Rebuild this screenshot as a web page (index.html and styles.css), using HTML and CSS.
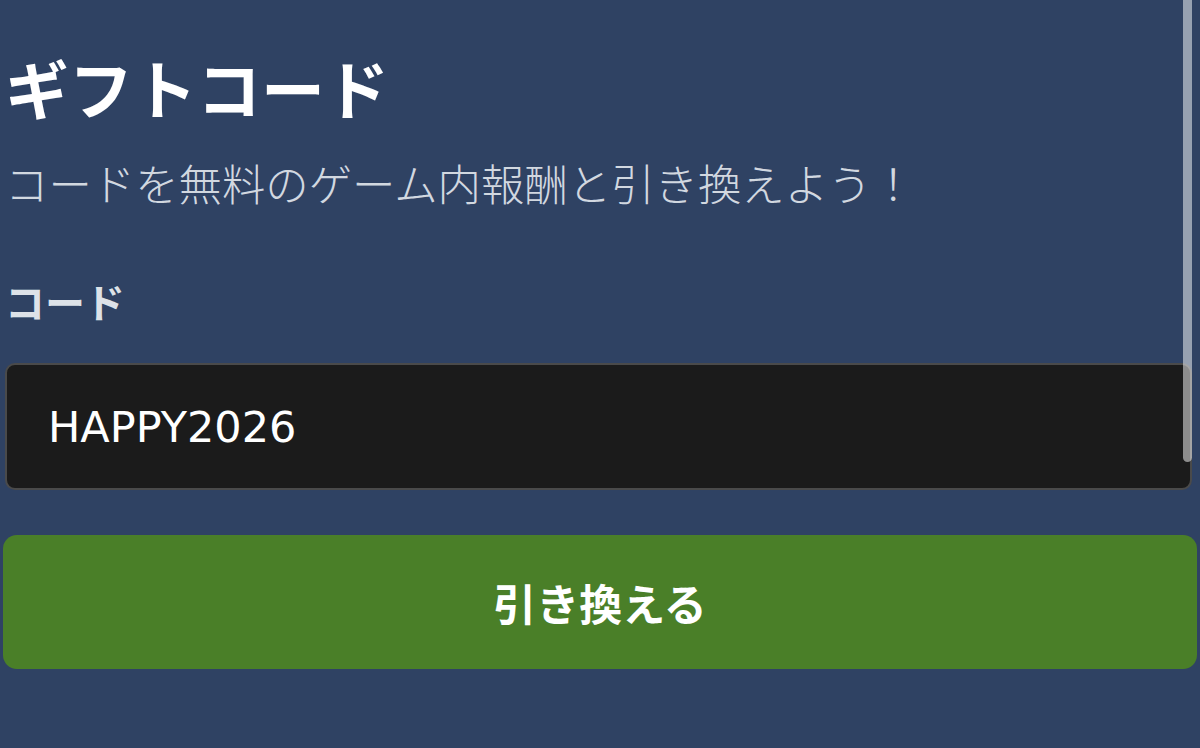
FILE: index.html
```html
<!DOCTYPE html>
<html lang="ja">
<head>
<meta charset="utf-8">
<title>ギフトコード</title>
<link rel="stylesheet" href="styles.css">
</head>
<body>
<main class="page">
  <h1 class="title">ギフトコード</h1>
  <p class="subtitle">コードを無料のゲーム内報酬と引き換えよう！</p>
  <label class="label" for="code">コード</label>
  <div class="field">
    <input id="code" class="input" type="text" value="HAPPY2026">
  </div>
  <button class="redeem" type="button">引き換える</button>
</main>
<div class="scroll-thumb"></div>
</body>
</html>
```
FILE: styles.css
```css
html, body {
  margin: 0;
  padding: 0;
  height: 100%;
  overflow: hidden;
}
body {
  background: #2f4263;
  font-family: "Noto Sans CJK JP", "Noto Sans", sans-serif;
  position: relative;
}
.page {
  display: flex;
  flex-direction: column;
  padding: 54px 8px 0 5px;
}
.title {
  margin: 0;
  font-size: 64px;
  line-height: 1;
  font-weight: 700;
  color: #ffffff;
}
.subtitle {
  margin: 43px 0 0;
  font-size: 43.4px;
  line-height: 1;
  font-weight: 300;
  color: #d2d8e0;
}
.label {
  margin-top: 77px;
  font-size: 40px;
  line-height: 1;
  font-weight: 700;
  color: #dde2e8;
}
.field {
  margin-top: 42px;
  display: flex;
}
.input {
  flex: 1;
  box-sizing: border-box;
  height: 127px;
  margin: 0;
  padding: 0 0 0 41px;
  background: #1b1b1b;
  border: 2px solid #4a4a4a;
  border-radius: 10px;
  color: #ffffff;
  font-family: "DejaVu Sans", "Liberation Sans", sans-serif;
  font-size: 43px;
  font-weight: 400;
  outline: none;
}
.redeem {
  margin: 45px -5px 0 -2px;
  height: 134px;
  border: 0;
  border-radius: 14px;
  background: #4a7f28;
  color: #ffffff;
  font-family: "Noto Sans CJK JP", "Noto Sans", sans-serif;
  font-size: 43px;
  font-weight: 700;
  padding: 0;
}
.scroll-thumb {
  position: absolute;
  top: 0;
  right: 8px;
  width: 9px;
  height: 462px;
  border-radius: 0 0 5px 5px;
  background: rgba(255, 255, 255, 0.5);
}
```
